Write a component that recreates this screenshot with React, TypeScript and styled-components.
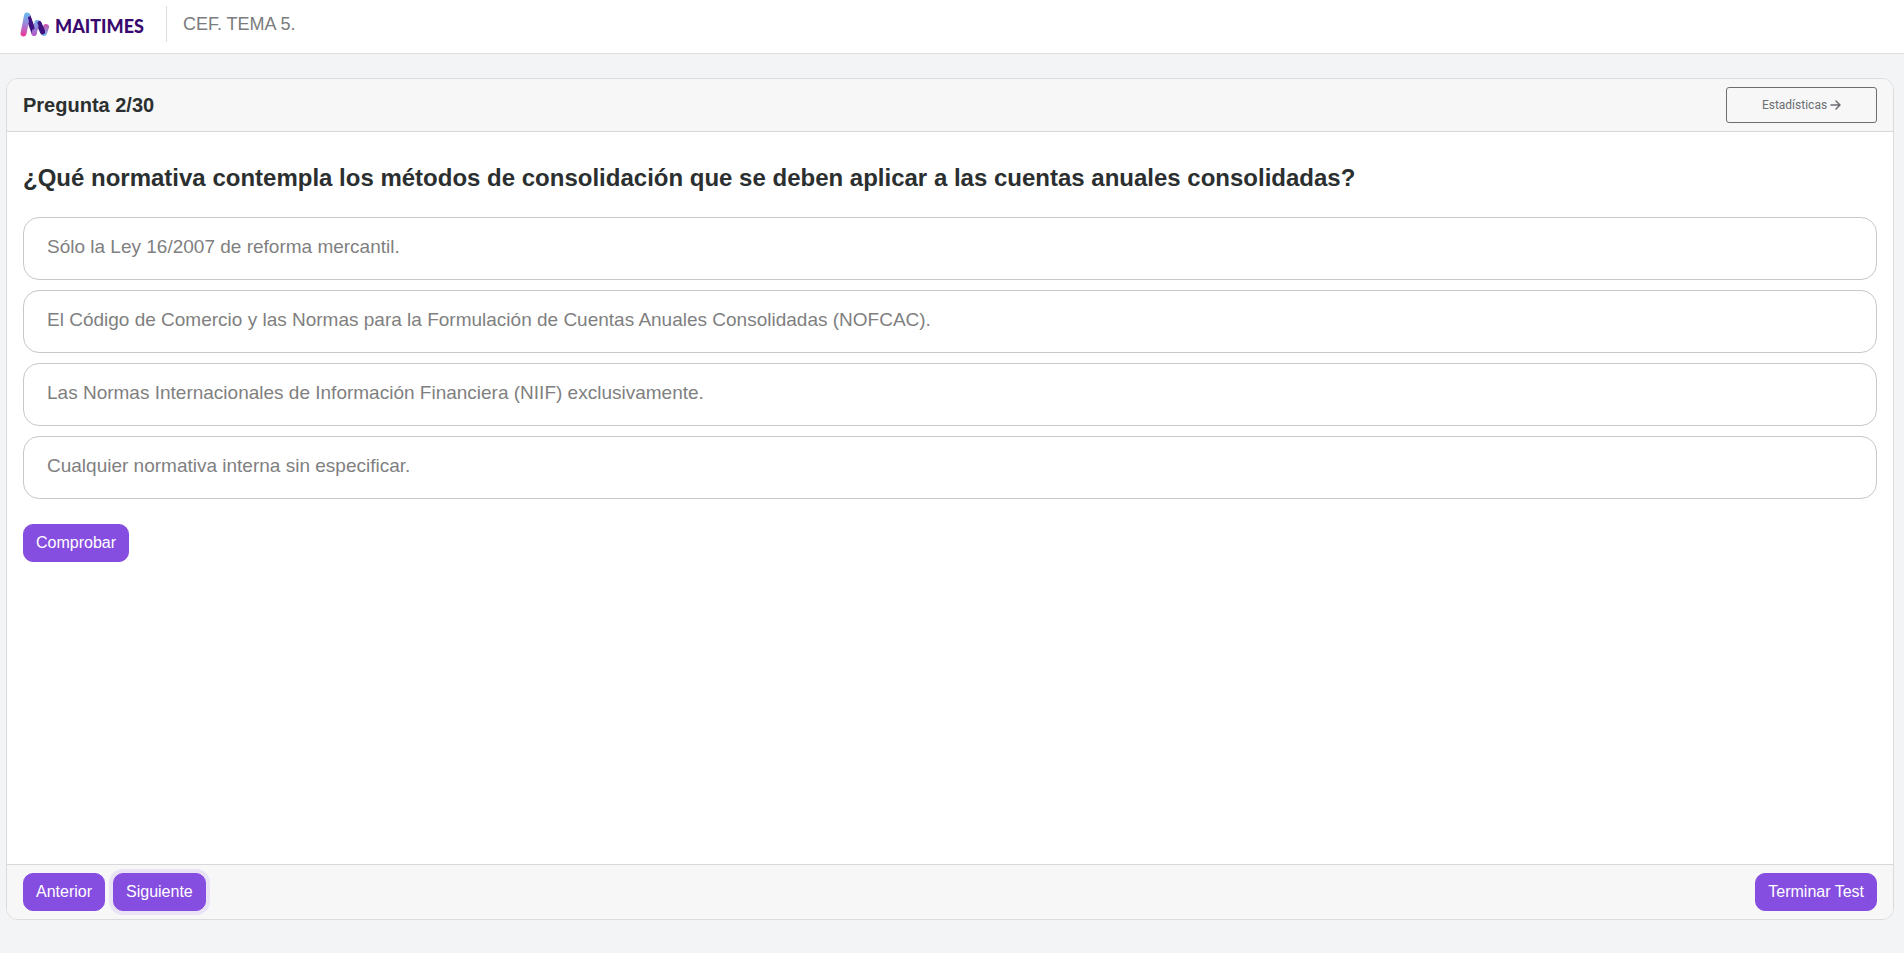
import React, { useState } from "react";
import styled, { createGlobalStyle } from "styled-components";

const GlobalStyle = createGlobalStyle`
  *, *::before, *::after { box-sizing: border-box; }
  body {
    margin: 0;
    background: #f2f4f6;
    color: #2b2f2f;
    font-family: "Liberation Sans", Arial, sans-serif;
    font-size: 16px;
    line-height: 24px;
  }
  button { font-family: inherit; cursor: pointer; }
`;

const Page = styled.div`
  min-height: 100vh;
  display: flex;
  flex-direction: column;
`;

const TopBar = styled.header`
  display: flex;
  align-items: center;
  gap: 22px;
  padding: 6px 20px 11px;
  background: #fff;
  border-bottom: 1px solid #dcdee0;
`;

const Brand = styled.a`
  display: flex;
  align-items: center;
  gap: 5px;
  color: #3a0a70;
  text-decoration: none;
  font: 900 18px/24px Lato, sans-serif;
`;

const BrandName = styled.span`
  padding-top: 4px;
`;

const TopicTitle = styled.div`
  display: flex;
  align-items: center;
  height: 36px;
  padding-left: 16px;
  border-left: 1px solid #dcdee0;
  color: #7a7c7e;
  font-size: 18px;
`;

const Card = styled.main`
  flex: 1;
  display: flex;
  flex-direction: column;
  margin: 24px 10px 33px 6px;
  background: #fff;
  border: 1px solid #d9dbdd;
  border-radius: 12px;
  overflow: hidden;
`;

const CardHeader = styled.div`
  display: flex;
  align-items: center;
  justify-content: space-between;
  padding: 8px 16px;
  background: #f7f7f7;
  border-bottom: 1px solid #d9d9d9;
`;

const Counter = styled.h1`
  margin: 0;
  font-size: 20px;
  line-height: 24px;
`;

const StatsButton = styled.button`
  display: flex;
  align-items: center;
  justify-content: center;
  gap: 3px;
  width: 151px;
  height: 36px;
  background: transparent;
  border: 1px solid #6c6e72;
  border-radius: 3px;
  color: #6c6e72;
  font-family: Roboto, sans-serif;
  font-size: 12px;
`;

const CardBody = styled.form`
  flex: 1;
  padding: 31px 16px;
`;

const Question = styled.h2`
  margin: 0 0 25px;
  font-size: 24px;
  line-height: 29px;
`;

const Options = styled.div`
  display: flex;
  flex-direction: column;
  gap: 10px;
  margin-bottom: 25px;
`;

const Option = styled.label<{ $selected: boolean }>`
  display: flex;
  padding: 17px 23px 20px;
  border: 1px solid ${(p) => (p.$selected ? "#864ee0" : "#c8c8c8")};
  border-radius: 16px;
  color: #7f7f7f;
  font-size: 19px;
  cursor: pointer;
`;

const HiddenRadio = styled.input`
  appearance: none;
  width: 0;
  margin: 0;
`;

const PrimaryButton = styled.button<{ $focused?: boolean }>`
  padding: 7px 12px;
  border: 1px solid #864ee0;
  border-radius: 10px;
  background: #864ee0;
  color: #fff;
  font-size: 16px;
  line-height: 22px;
  box-shadow: ${(p) => (p.$focused ? "0 0 0 4px #e9e3f5" : "none")};
`;

const CardFooter = styled.div`
  display: flex;
  justify-content: space-between;
  padding: 8px 16px;
  background: #f7f7f7;
  border-top: 1px solid #d9d9d9;
`;

const ButtonGroup = styled.div`
  display: flex;
  gap: 8px;
`;

const answers = [
  "Sólo la Ley 16/2007 de reforma mercantil.",
  "El Código de Comercio y las Normas para la Formulación de Cuentas Anuales Consolidadas (NOFCAC).",
  "Las Normas Internacionales de Información Financiera (NIIF) exclusivamente.",
  "Cualquier normativa interna sin especificar.",
];

const LogoMark = () => (
  <svg width="30" height="25" viewBox="0 0 30 25" fill="none" strokeLinecap="round" strokeWidth="6" aria-hidden="true">
    <defs>
      <linearGradient id="stem" gradientUnits="userSpaceOnUse" x1="0" y1="2" x2="0" y2="23">
        <stop offset="0" stopColor="#6cb8ee" />
        <stop offset="0.5" stopColor="#a082d8" />
        <stop offset="1" stopColor="#e83c9c" />
      </linearGradient>
      <linearGradient id="fold" gradientUnits="userSpaceOnUse" x1="0" y1="8" x2="0" y2="23">
        <stop offset="0" stopColor="#70b4ea" />
        <stop offset="1" stopColor="#b458c8" />
      </linearGradient>
      <linearGradient id="tail" gradientUnits="userSpaceOnUse" x1="0" y1="12" x2="0" y2="24">
        <stop offset="0" stopColor="#d048ac" />
        <stop offset="1" stopColor="#70bcee" />
      </linearGradient>
    </defs>
    <path d="M26 15 L24 21" stroke="url(#tail)" />
    <path d="M8 4 L14 21" stroke="#3d1180" strokeWidth="5" />
    <path d="M18.500 11 L22.500 20" stroke="#3d1180" strokeWidth="5" />
    <path d="M3.500 21.500 L7 3.500" stroke="url(#stem)" />
    <path d="M14 21.500 L17 10.500" stroke="url(#fold)" strokeWidth="5" />
    <path d="M9.500 6 L13 16" stroke="#3d1180" strokeWidth="3" />
    <path d="M19.500 11 L23 19" stroke="#3d1180" strokeWidth="4" />
  </svg>
);

const ArrowRight = () => (
  <svg width="11" height="10" viewBox="0 0 11 10" fill="none" stroke="currentColor" strokeWidth="1.500" strokeLinecap="round" strokeLinejoin="round" aria-hidden="true">
    <path d="M1 5 H10 M6 1 L10 5 L6 9" />
  </svg>
);

export default function App() {
  const [selected, setSelected] = useState<number | null>(null);
  return (
    <>
      <GlobalStyle />
      <Page>
        <TopBar>
          <Brand href="#">
            <LogoMark />
            <BrandName>MAITIMES</BrandName>
          </Brand>
          <TopicTitle>CEF. TEMA 5.</TopicTitle>
        </TopBar>
        <Card>
          <CardHeader>
            <Counter>Pregunta 2/30</Counter>
            <StatsButton type="button">
              Estadísticas
              <ArrowRight />
            </StatsButton>
          </CardHeader>
          <CardBody onSubmit={(e) => e.preventDefault()}>
            <Question id="question">
              ¿Qué normativa contempla los métodos de consolidación que se deben aplicar a las cuentas anuales consolidadas?
            </Question>
            <Options role="radiogroup" aria-labelledby="question">
              {answers.map((text, i) => (
                <Option key={text} htmlFor={`answer-${i}`} $selected={selected === i}>
                  <HiddenRadio
                    type="radio"
                    id={`answer-${i}`}
                    name="answer"
                    checked={selected === i}
                    onChange={() => setSelected(i)}
                  />
                  {text}
                </Option>
              ))}
            </Options>
            <PrimaryButton type="submit">Comprobar</PrimaryButton>
          </CardBody>
          <CardFooter>
            <ButtonGroup>
              <PrimaryButton type="button">Anterior</PrimaryButton>
              <PrimaryButton type="button" $focused>Siguiente</PrimaryButton>
            </ButtonGroup>
            <PrimaryButton type="button">Terminar Test</PrimaryButton>
          </CardFooter>
        </Card>
      </Page>
    </>
  );
}
